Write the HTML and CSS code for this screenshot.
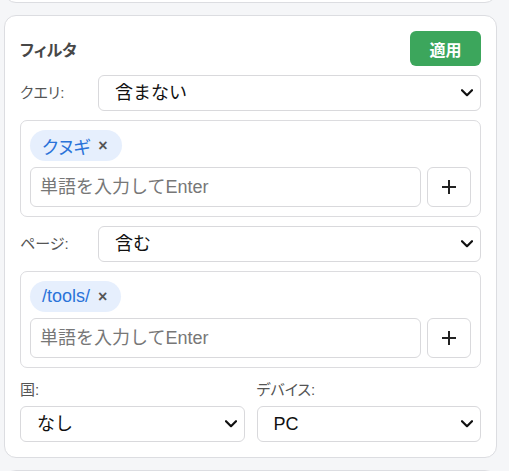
FILE: index.html
```html
<!DOCTYPE html>
<html lang="ja">
<head>
<meta charset="utf-8">
<title>フィルタ</title>
<link rel="stylesheet" href="styles.css">
</head>
<body>
<div class="stack">
  <div class="card card-prev"></div>
  <section class="card filter">
    <div class="header">
      <h2 class="title">フィルタ</h2>
      <button class="apply" type="button">適用</button>
    </div>
    <div class="row">
      <label class="label">クエリ:</label>
      <div class="select-wrap">
        <select class="select"><option>含まない</option></select>
        <svg class="chev" width="12" height="8" viewBox="0 0 12 8"><path d="M1 1.2 L6 6.2 L11 1.2" fill="none" stroke="#111" stroke-width="2.2" stroke-linecap="round" stroke-linejoin="round"/></svg>
      </div>
    </div>
    <div class="tagbox">
      <div class="chips">
        <span class="chip">クヌギ<span class="x">×</span></span>
      </div>
      <div class="add">
        <input class="input" type="text" placeholder="単語を入力してEnter">
        <button class="plus" type="button"><svg width="14" height="14" viewBox="0 0 14 14"><path d="M7 0 V14 M0 7 H14" stroke="#222" stroke-width="2"/></svg></button>
      </div>
    </div>
    <div class="row">
      <label class="label">ページ:</label>
      <div class="select-wrap">
        <select class="select"><option>含む</option></select>
        <svg class="chev" width="12" height="8" viewBox="0 0 12 8"><path d="M1 1.2 L6 6.2 L11 1.2" fill="none" stroke="#111" stroke-width="2.2" stroke-linecap="round" stroke-linejoin="round"/></svg>
      </div>
    </div>
    <div class="tagbox">
      <div class="chips">
        <span class="chip">/tools/<span class="x">×</span></span>
      </div>
      <div class="add">
        <input class="input" type="text" placeholder="単語を入力してEnter">
        <button class="plus" type="button"><svg width="14" height="14" viewBox="0 0 14 14"><path d="M7 0 V14 M0 7 H14" stroke="#222" stroke-width="2"/></svg></button>
      </div>
    </div>
    <div class="pair">
      <div class="field">
        <label class="label">国:</label>
        <div class="select-wrap">
          <select class="select"><option>なし</option></select>
          <svg class="chev" width="12" height="8" viewBox="0 0 12 8"><path d="M1 1.2 L6 6.2 L11 1.2" fill="none" stroke="#111" stroke-width="2.2" stroke-linecap="round" stroke-linejoin="round"/></svg>
        </div>
      </div>
      <div class="field">
        <label class="label">デバイス:</label>
        <div class="select-wrap">
          <select class="select"><option>PC</option></select>
          <svg class="chev" width="12" height="8" viewBox="0 0 12 8"><path d="M1 1.2 L6 6.2 L11 1.2" fill="none" stroke="#111" stroke-width="2.2" stroke-linecap="round" stroke-linejoin="round"/></svg>
        </div>
      </div>
    </div>
  </section>
  <div class="card card-next"></div>
</div>
</body>
</html>
```

FILE: styles.css
```css
* { box-sizing: border-box; }
html, body { margin: 0; }
body {
  background: #f5f6f8;
  font-family: "Liberation Sans", "Noto Sans CJK JP", sans-serif;
  color: #222;
  padding: 0 12px 0 4px;
  overflow: hidden;
  height: 471px;
}
.stack { display: flex; flex-direction: column; gap: 12px; }
.card {
  background: #fff;
  border: 1px solid #dcdde1;
  border-radius: 12px;
}
.card-prev { height: 40px; margin-top: -37px; flex: none; }
.card-next { height: 40px; flex: none; }
.filter {
  padding: 15px;
  display: flex;
  flex-direction: column;
  gap: 9px;
}
.header {
  display: flex;
  justify-content: space-between;
  align-items: center;
  height: 35px;
}
.title {
  margin: 0;
  font-size: 16px;
  font-weight: 700;
  color: #474747;
  font-feature-settings: "palt";
}
.apply {
  width: 71px;
  height: 35px;
  border: none;
  border-radius: 6px;
  background: #3ca65c;
  color: #fff;
  font-family: inherit;
  font-size: 16px;
  font-weight: 700;
  padding: 0;
}
.row {
  display: grid;
  grid-template-columns: 78px 1fr;
  align-items: center;
}
.label {
  font-size: 15px;
  color: #555;
  line-height: 20px;
  font-feature-settings: "palt";
}
.select-wrap { position: relative; }
.select {
  appearance: none;
  -webkit-appearance: none;
  width: 100%;
  height: 36px;
  border: 1px solid #d9d9dc;
  border-radius: 6px;
  background: #fff;
  padding: 0 30px 0 16px;
  font-family: inherit;
  font-size: 18px;
  color: #111;
}
.chev {
  position: absolute;
  right: 8px;
  top: 14px;
  pointer-events: none;
}
.tagbox {
  border: 1px solid #dcdcdf;
  border-radius: 7px;
  padding: 9px;
  display: flex;
  flex-direction: column;
  gap: 6px;
}
.chips { display: flex; gap: 6px; }
.chip {
  display: inline-flex;
  align-items: center;
  gap: 8px;
  height: 31px;
  padding: 0 14px 0 12px;
  border-radius: 16px;
  background: #e6effd;
  color: #2a73d9;
  font-size: 18px;
  font-feature-settings: "palt";
}
.x {
  color: #555;
  font-weight: 700;
  font-size: 16px;
}
.add { display: flex; gap: 6px; }
.input {
  flex: 1;
  min-width: 0;
  height: 40px;
  border: 1px solid #d9d9dc;
  border-radius: 6px;
  padding: 0 9px;
  font-family: inherit;
  font-size: 18px;
  color: #222;
}
.input::placeholder { color: #777; }
.plus {
  width: 44px;
  height: 40px;
  border: 1px solid #d9d9dc;
  border-radius: 6px;
  background: #fff;
  padding: 0;
  display: flex;
  align-items: center;
  justify-content: center;
}
.pair {
  display: grid;
  grid-template-columns: 1fr 1fr;
  gap: 12px;
}
.field {
  display: flex;
  flex-direction: column;
  gap: 6px;
  padding-top: 3px;
}
```
